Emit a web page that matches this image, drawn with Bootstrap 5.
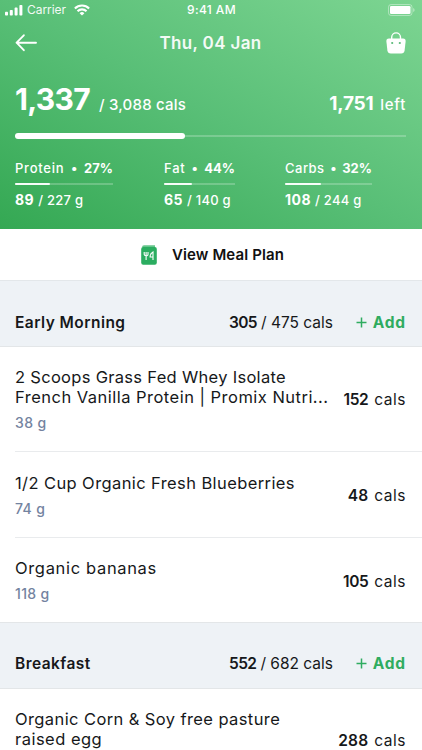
<!DOCTYPE html>
<html lang="en">
<head>
<meta charset="utf-8">
<meta name="viewport" content="width=device-width, initial-scale=1">
<title>Food diary</title>
<link href="https://cdn.jsdelivr.net/npm/bootstrap@5.3.0/dist/css/bootstrap.min.css" rel="stylesheet">
<style>
body{font-family:Inter,"Liberation Sans",sans-serif;font-size:16px;line-height:20px;color:#16181a;background:#fff;height:750px;overflow:hidden}
svg{display:block;flex:none}
.hero{height:229px;padding:0 16px 0 15px;background:linear-gradient(to top right,#34a853 0%,#59bf77 50%,#7dd592 100%)}
.status{height:20px;margin:0 -9px 0 -10px;font-size:12px}
.carrier{margin-left:4px;width:47px;letter-spacing:-.05px;opacity:.93}
.clock{margin-left:97px;font-weight:500;letter-spacing:.37px}
.bar-top{height:46px}
.title{font-size:17px;font-weight:600;letter-spacing:.34px;opacity:.93;margin-right:2px}
.totals{height:30px;margin-top:18px;line-height:30px;font-size:15px;font-weight:500}
.big{font-size:30px;font-weight:700;letter-spacing:-.7px;width:84px}
.goal{letter-spacing:.21px}
.left-n{font-size:19px;font-weight:700;letter-spacing:-.25px;margin-right:7px}
.left-t{letter-spacing:.7px}
.track{height:6px;margin-top:19px;background:linear-gradient(#ffffff38,#ffffff38) center/100% 2px no-repeat}
.track .progress-bar{background:#fff;border-radius:3px}
.macros{margin-top:19px;font-size:13px;font-weight:500}
.macro b{font-weight:700}
.macro .track{height:2px;margin:5px 0}
.macro .track .progress-bar{border-radius:1px;opacity:.95}
.protein{width:98px;margin-right:51px}
.fat{width:71px;margin-right:50px}
.carbs{width:87px}
.amount b{font-size:14px;letter-spacing:.5px;margin-right:4px}
.amount{letter-spacing:.25px}
.plan{height:52px;font-size:15px;font-weight:600;letter-spacing:.11px;color:#111;border-bottom:1px solid #e3e7ea}
.plan svg{margin:1px 15px 0 3px}
.plan span{margin-top:1px}
.section{height:66px;padding:18px 16px 0 15px;background:#eef2f6;border-bottom:1px solid #e3e6e8;font-size:15.5px}
.section.compact{padding-top:16px}
.section h2{font-size:15.5px;line-height:20px;font-weight:600;letter-spacing:.45px}
.section b{font-weight:600;letter-spacing:-.6px;margin-right:4px}
.add{width:50px;margin-left:23px;color:#2fac60;font-weight:700;letter-spacing:.85px;text-decoration:none}
.food{margin-left:15px;padding:21px 16px 18px 0;border-bottom:1px solid #e9ebed}
.food.first{padding-top:20px}
.food.last-row{margin-left:0;padding:20px 16px 18px 15px;border-color:#e3e6e8}
.food.last-row .cals{margin-top:1px}
.food.partial{padding-top:20px;padding-bottom:0;border:0}
.food.partial .cals{margin-top:22px}
.food-name{font-size:16.5px}
.weight{margin-top:6px;font-size:14px;font-weight:500;letter-spacing:.36px;color:#7383a0}
.cals{font-size:15.5px;letter-spacing:.5px}
.cals b{font-weight:600;letter-spacing:-.4px;margin-right:6px}
.cals .wide{letter-spacing:.2px}
.ls-30{letter-spacing:.3px}.ls-37{letter-spacing:.4px}.ls-46{letter-spacing:.48px}.ls-57{letter-spacing:.66px}.ls-75{letter-spacing:.76px}
</style>
<script src="https://cdn.jsdelivr.net/npm/bootstrap@5.3.0/dist/js/bootstrap.bundle.min.js"></script>
</head>
<body>
<header class="hero text-white">
  <div class="status d-flex align-items-center">
    <svg width="18" height="12" viewBox="0 0 18 12" fill="#fff"><rect y="7.8" width="3" height="3.7" rx=".8"/><rect x="4.8" y="6" width="3" height="5.5" rx=".8"/><rect x="9.6" y="3.6" width="3" height="7.9" rx=".8"/><rect x="14.4" y="1" width="3" height="10.5" rx=".8"/></svg>
    <span class="carrier">Carrier</span>
    <svg width="16" height="12" viewBox="0 0 16 12" fill="none" stroke="#fff" stroke-width="2.1"><path d="M.9 4.5a10 10 0 0 1 14.2 0M3.5 7.2a6.4 6.4 0 0 1 9 0"/><path d="M8 11.6 5.6 9.2a3.4 3.4 0 0 1 4.8 0z" fill="#fff" stroke="none"/></svg>
    <span class="clock">9:41 AM</span>
    <svg class="ms-auto" width="27" height="12" viewBox="0 0 27 12"><rect x=".5" y=".5" width="23.5" height="11" rx="2.6" fill="none" stroke="#fff" stroke-opacity=".4"/><rect x="2" y="2" width="20.5" height="8" rx="1.3" fill="#fff"/><path d="M25.2 4v4q1.4-.6 1.4-2t-1.4-2" fill="#fff" fill-opacity=".45"/></svg>
  </div>
  <div class="bar-top d-flex align-items-center justify-content-between">
    <svg width="22" height="18" viewBox="0 0 22 18" fill="none" stroke="#fff" stroke-width="1.9" stroke-linecap="round" stroke-linejoin="round"><path d="M21 8.7H1.6M8.8 1.3 1.6 8.7l7.2 7.5"/></svg>
    <span class="title">Thu, 04 Jan</span>
    <svg width="20" height="22" viewBox="0 0 20 22"><path d="M5.7 7V5.3a4.4 4.4 0 0 1 8.8 0V7" fill="none" stroke="#fff" stroke-width="1.4"/><path d="M3 6.5h14q2.9 0 2.6 2.9l-1 9.2q-.4 3-3.4 3H4.8q-3 0-3.4-3L.4 9.4Q.1 6.5 3 6.5z" fill="#fff"/><g fill="#59b977"><circle cx="6.2" cy="11" r="1.1"/><circle cx="13.8" cy="11" r="1.1"/></g></svg>
  </div>
  <div class="totals d-flex align-items-baseline">
    <span class="big">1,337</span><span class="goal">/ 3,088 cals</span>
    <span class="left-n ms-auto">1,751</span><span class="left-t">left</span>
  </div>
  <div class="track"><div class="progress-bar h-100" style="width:43.4%"></div></div>
  <div class="macros d-flex">
    <div class="macro protein">
      <div class="d-flex justify-content-between"><span class="ls-75">Protein</span><span>•</span><b>27%</b></div>
      <div class="track"><div class="progress-bar h-100" style="width:36%"></div></div>
      <div class="amount text-nowrap"><b>89</b>/ 227 g</div>
    </div>
    <div class="macro fat">
      <div class="d-flex justify-content-between"><span class="ls-75">Fat</span><span>•</span><b>44%</b></div>
      <div class="track"><div class="progress-bar h-100" style="width:40%"></div></div>
      <div class="amount text-nowrap"><b>65</b>/ 140 g</div>
    </div>
    <div class="macro carbs">
      <div class="d-flex justify-content-between"><span class="ls-46">Carbs</span><span>•</span><b>32%</b></div>
      <div class="track"><div class="progress-bar h-100" style="width:41%"></div></div>
      <div class="amount text-nowrap"><b>108</b>/ 244 g</div>
    </div>
  </div>
</header>
<main>
  <div class="plan d-flex align-items-center justify-content-center">
    <svg width="16" height="20" viewBox="0 0 16 20"><path d="M1 2.5Q1 .3 3 .3h11v1.6H3q-1 0-1 .6z" fill="#65c58b"/><rect x=".2" y="2" width="15.6" height="17.8" rx="2" fill="#2bad60"/><path d="M3.2 7v2.2q0 1.6 1.9 1.6T7 9.2V7M5.1 7v8M12 15V7q-2.9 1.5-2.9 5H12" fill="none" stroke="#fff" stroke-width="1.1"/></svg>
    <span>View Meal Plan</span>
  </div>
  <div class="section d-flex align-items-center">
    <h2 class="m-0 me-auto">Early Morning</h2><span><b>305</b>/ 475 cals</span>
    <a class="add d-flex justify-content-between align-items-center" href="#"><svg width="11" height="11" viewBox="0 0 11 11" stroke="#2fac60" stroke-width="1.5"><path d="M.5 5.5h10M5.5.5v10"/></svg><span>Add</span></a>
  </div>
  <div class="food first d-flex align-items-center text-nowrap">
    <div class="me-auto"><div class="food-name ls-30">2 Scoops Grass Fed Whey Isolate</div><div class="food-name ls-46">French Vanilla Protein | Promix Nutri...</div><div class="weight">38 g</div></div>
    <div class="cals"><b>152</b>cals</div>
  </div>
  <div class="food d-flex align-items-center text-nowrap">
    <div class="me-auto"><div class="food-name ls-37">1/2 Cup Organic Fresh Blueberries</div><div class="weight">74 g</div></div>
    <div class="cals"><b class="wide">48</b>cals</div>
  </div>
  <div class="food last-row d-flex align-items-center text-nowrap">
    <div class="me-auto"><div class="food-name ls-57">Organic bananas</div><div class="weight">118 g</div></div>
    <div class="cals"><b>105</b>cals</div>
  </div>
  <div class="section compact d-flex align-items-center">
    <h2 class="m-0 me-auto">Breakfast</h2><span><b>552</b>/ 682 cals</span>
    <a class="add d-flex justify-content-between align-items-center" href="#"><svg width="11" height="11" viewBox="0 0 11 11" stroke="#2fac60" stroke-width="1.5"><path d="M.5 5.5h10M5.5.5v10"/></svg><span>Add</span></a>
  </div>
  <div class="food partial d-flex align-items-start text-nowrap">
    <div class="me-auto"><div class="food-name ls-37">Organic Corn &amp; Soy free pasture</div><div class="food-name ls-46">raised egg</div></div>
    <div class="cals"><b class="wide">288</b>cals</div>
  </div>
</main>
</body>
</html>
